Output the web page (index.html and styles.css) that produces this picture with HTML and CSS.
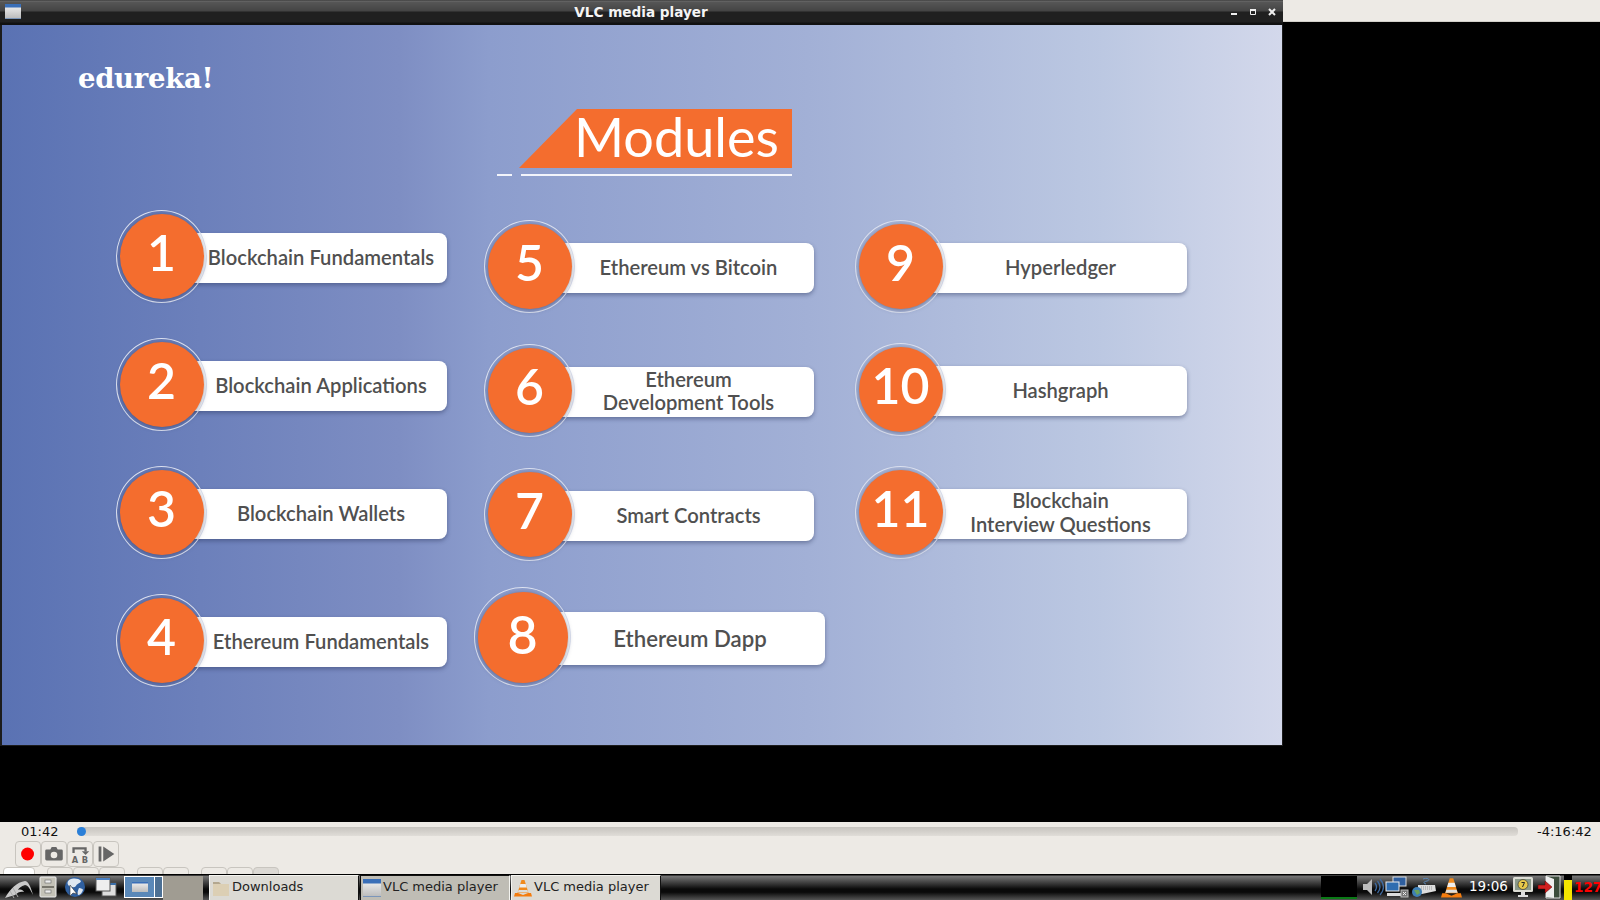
FILE: index.html
```html
<!DOCTYPE html>
<html lang="en">
<head>
<meta charset="utf-8">
<title>VLC media player</title>
<link rel="stylesheet" href="styles.css">
</head>
<body>
<div class="upper">
  <div class="window">
    <div class="titlebar">
      <div class="win-icon"></div>
      <div class="title">VLC media player</div>
      <div class="win-btns">
        <svg class="win-btn" viewBox="0 0 8 8"><rect x="1" y="5" width="6" height="2" fill="#eee"/></svg>
        <svg class="win-btn" viewBox="0 0 8 8"><path d="M1.5 1.5h5v5h-5z" fill="none" stroke="#eee"/><rect x="1" y="1" width="6" height="2" fill="#eee"/></svg>
        <svg class="win-btn" viewBox="0 0 8 8"><path d="M1 1l6 6M7 1l-6 6" stroke="#eee" stroke-width="2"/></svg>
      </div>
    </div>
    <div class="slide">
      <div class="logo">edureka!</div>
      <div class="heading">
        <div class="banner">Modules</div>
        <div class="rule"><span class="rule-a"></span><span class="rule-b"></span></div>
      </div>
      <div class="columns">
        <div class="col col-1">
          <div class="item"><div class="ring"><div class="disc">1</div></div><div class="pill">Blockchain Fundamentals</div></div>
          <div class="item"><div class="ring"><div class="disc">2</div></div><div class="pill">Blockchain Applications</div></div>
          <div class="item"><div class="ring"><div class="disc">3</div></div><div class="pill">Blockchain Wallets</div></div>
          <div class="item"><div class="ring"><div class="disc">4</div></div><div class="pill">Ethereum Fundamentals</div></div>
        </div>
        <div class="col col-2">
          <div class="item"><div class="ring"><div class="disc">5</div></div><div class="pill">Ethereum vs Bitcoin</div></div>
          <div class="item"><div class="ring"><div class="disc">6</div></div><div class="pill">Ethereum<br>Development Tools</div></div>
          <div class="item"><div class="ring"><div class="disc">7</div></div><div class="pill">Smart Contracts</div></div>
          <div class="item item-big"><div class="ring"><div class="disc">8</div></div><div class="pill">Ethereum Dapp</div></div>
        </div>
        <div class="col col-3">
          <div class="item"><div class="ring"><div class="disc">9</div></div><div class="pill">Hyperledger</div></div>
          <div class="item"><div class="ring"><div class="disc">10</div></div><div class="pill">Hashgraph</div></div>
          <div class="item"><div class="ring"><div class="disc">11</div></div><div class="pill pill-tall">Blockchain<br>Interview Questions</div></div>
        </div>
      </div>
    </div>
  </div>
  <div class="side"></div>
</div>

<div class="controls">
  <div class="seek">
    <span class="time time-l">01:42</span>
    <div class="track"><span class="knob"></span></div>
    <span class="time time-r">-4:16:42</span>
  </div>
  <div class="buttons">
    <div class="cbtn"><svg viewBox="0 0 26 26"><circle cx="12.500" cy="13" r="7" fill="#f00"/></svg></div>
    <div class="cbtn"><svg viewBox="0 0 26 26"><path fill="#666" fill-rule="evenodd" d="M5 8h4l1.500-2.500h5L17 8h4a1.500 1.500 0 0 1 1.500 1.500v9A1.500 1.500 0 0 1 21 20H5a1.500 1.500 0 0 1-1.500-1.500v-9A1.500 1.500 0 0 1 5 8zm8 2.500a3.500 3.500 0 1 0 0 7.200 3.500 3.500 0 0 0 0-7.200z"/></svg></div>
    <div class="cbtn"><svg viewBox="0 0 26 26"><path d="M6 12V7h13v3" fill="none" stroke="#666" stroke-width="2.500"/><path d="M15 10h8l-4 4z" fill="#666"/><text x="4" y="23" class="ab">A</text><text x="15" y="23" class="ab">B</text></svg></div>
    <div class="cbtn"><svg viewBox="0 0 26 26"><path fill="#666" d="M5 5h3v16H5zM10 5l12 8-12 8z"/></svg></div>
  </div>
  <div class="stub-row">
    <span class="stub stub-white"></span>
    <div class="stub-group"><span class="stub"></span><span class="stub"></span><span class="stub"></span></div>
    <div class="stub-group"><span class="stub"></span><span class="stub"></span></div>
    <div class="stub-group"><span class="stub"></span><span class="stub"></span><span class="stub stub-dim"></span></div>
  </div>
</div>

<div class="taskbar">
  <svg class="tb-logo" viewBox="0 0 30 24"><path d="M1 23C6 14 13 7 21 6c3 0 6 6 8 14-3-6-5-10-8-10-4 1-6 3-7 5 3-1 5 0 6 2-3-1-6 0-9 3-3 1-7 2-10 3z" fill="#c9c9c9"/><path d="M9 13l5 9M6 16l4 7" stroke="#aaa" stroke-width="1"/></svg>
  <svg class="tb-cab" viewBox="0 0 18 22"><rect x="1" y="1" width="16" height="20" rx="1" fill="#c4c2b8" stroke="#eee"/><path d="M3 10.500h12M3 11.500h12" stroke="#77756c"/><rect x="6" y="4" width="6" height="3" fill="#eee" stroke="#666" stroke-width=".6"/><rect x="6" y="14" width="6" height="3" fill="#eee" stroke="#666" stroke-width=".6"/></svg>
  <svg class="tb-globe" viewBox="0 0 22 22"><circle cx="11" cy="11" r="10" fill="#2f5f9f"/><path d="M5 4c4-2 9-2 12 1-1 3-4 2-5 5-2 2-4 1-7 0-2-2-2-4 0-6zM15 12c2 0 4 1 4 2-1 3-3 5-5 5-1-2 0-5 1-7z" fill="#dfe7f0"/><path d="M6 9v11l3-3 4 1z" fill="#fff" stroke="#333" stroke-width=".6"/></svg>
  <svg class="tb-wins" viewBox="0 0 22 20"><rect x="7" y="6" width="14" height="13" fill="#ddd" stroke="#555"/><rect x="7" y="6" width="14" height="2" fill="#3a6ea8"/><rect x="1" y="1" width="14" height="13" fill="#eee" stroke="#555"/><rect x="1" y="1" width="14" height="2" fill="#4a7fc0"/></svg>
  <div class="pager">
    <div class="pager-a"><div class="pager-win"></div></div>
    <div class="pager-b"></div>
  </div>
  <div class="pager-grey"></div>
  <div class="task task-idle">
    <svg class="task-icon" viewBox="0 0 18 18"><path d="M1 3h6l2 2h8v12H1z" fill="#dccfb4"/><path d="M1 3h6l2 2H1z" fill="#b3a78f"/></svg>
    <span>Downloads</span>
  </div>
  <div class="task task-active">
    <div class="mini-win"></div>
    <span>VLC media player</span>
  </div>
  <div class="task task-last">
    <svg class="task-icon" viewBox="0 0 18 18"><use href="#cone"/></svg>
    <span>VLC media player</span>
  </div>
  <div class="tray">
    <div class="graph"><span class="graph-line"></span></div>
    <svg class="tray-vol" viewBox="0 0 22 20"><path d="M1 7h4l5-5v16l-5-5H1z" fill="#bbb"/><path d="M13 6q3 4 0 8M15.500 4q5 6 0 12M18 2q7 8 0 16" fill="none" stroke="#3f6aa0" stroke-width="1.300"/></svg>
    <svg class="tray-net" viewBox="0 0 24 22"><rect x="8" y="1" width="13" height="9" fill="#2f5f9f" stroke="#ddd"/><rect x="1" y="6" width="13" height="9" fill="#2f6db0" stroke="#eee"/><rect x="2" y="17" width="14" height="3" fill="#ddd"/><rect x="16" y="14" width="7" height="7" fill="#777" stroke="#bbb"/><path d="M18 16l3 3m0-3l-3 3" stroke="#eee"/></svg>
    <svg class="tray-kbd" viewBox="0 0 24 22"><path d="M11 3c5-2 8 1 4 2s-4 2-1 3" fill="none" stroke="#5c87b5"/><path d="M6 9h17l1 6-14 3H6z" fill="#ddd"/><path d="M9 11h12M9 13h12" stroke="#999" stroke-dasharray="1 1"/><circle cx="5" cy="16" r="5" fill="#3f7fb5"/><path d="M2 14h5l1 3-3 2z" fill="#6aa35c"/></svg>
    <svg class="tray-cone" viewBox="0 0 18 18"><use href="#cone"/></svg>
    <span class="clock">19:06</span>
    <svg class="tray-mon" viewBox="0 0 22 22"><rect x="1" y="1" width="20" height="15" rx="1.500" fill="#dcdcd4"/><rect x="3" y="3" width="16" height="11" fill="#8a9a8a"/><circle cx="11" cy="8.500" r="5" fill="#e5c84a" stroke="#333" stroke-width=".7"/><path d="M9.500 6.500h3L10.500 11" fill="none" stroke="#222" stroke-width="1"/><path d="M9 16h4v3h3v2H6v-2h3z" fill="#ddd"/></svg>
    <svg class="tray-exit" viewBox="0 0 24 24"><path d="M9 1h14v22H9z" fill="#3c4c3c" stroke="#ddd"/><path d="M9 1l8 3v19l-8-1z" fill="#eee"/><path d="M1 10h7V6l7 6-7 6v-4H1z" fill="#d02020" stroke="#500" stroke-width=".5"/></svg>
    <div class="cpu"><span class="cpu-fill"></span></div>
    <span class="cpu-num">127</span>
  </div>
</div>

<svg class="defs" width="0" height="0" aria-hidden="true"><defs>
  <g id="cone"><path d="M7.500 1h3L14.500 14h-11z" fill="#f08a1d"/><path d="M6.300 5h5.400l1 3.500H5.300z" fill="#eee"/><path d="M4.600 11h8.800l.8 2.500H3.800z" fill="#ddd"/><path d="M1 14h3l5 2 5-2h3l1 3.500H0z" fill="#f47c0f"/></g>
</defs></svg>
</body>
</html>
```
FILE: styles.css
```css
* { box-sizing: border-box; }
html, body { margin: 0; padding: 0; }
body {
  width: 1600px;
  height: 900px;
  overflow: hidden;
  background: #000;
  display: flex;
  flex-direction: column;
  font-family: "DejaVu Sans", sans-serif;
}
.defs { display: block; flex: none; height: 0; }

/* upper black area with the window */
.upper { height: 822px; flex: none; display: flex; align-items: flex-start; }
.window { width: 1283px; height: 746px; background: #1c1c1c; flex: none; padding: 0 1px 1px 2px; }
.side { flex: 1; height: 22px; background: #edeae5; border-bottom: 1px solid #d2cfca; }

.titlebar {
  height: 25px;
  margin: 0 -1px 0 -2px;
  display: flex;
  align-items: center;
  background: linear-gradient(#2a2a2a 0, #6d6d6d 1px, #565656 2px, #444 11px, #202020 12px, #202020 22px, #111 23px);
  padding: 0 7px 2px 5px;
}
.win-icon {
  width: 16px;
  height: 15px;
  background: linear-gradient(#3a6fb8 0, #3a6fb8 3px, #e6e6e6 4px, #bdbdbd 14px, #3a6fb8 15px);
}
.title {
  flex: 1;
  text-align: center;
  color: #f4f4f4;
  font-weight: 700;
  font-size: 13.600px;
  line-height: 22px;
  padding-left: 31px;
}
.win-btns { display: flex; gap: 11px; }
.win-btn { width: 8px; height: 8px; display: block; }

/* slide */
.slide {
  width: 1280px;
  height: 720px;
  background: linear-gradient(90deg, #5a72b3 0%, #7e8ec3 31%, #8c9dcd 38%, #a2b0d6 63%, #bcc8e2 86%, #d3d8eb 100%);
  overflow: hidden;
}
.logo {
  height: 84px;
  padding: 37px 0 0 76px;
  font-family: "DejaVu Serif", serif;
  font-weight: 700;
  font-size: 27.500px;
  line-height: 32px;
  color: #fff;
  letter-spacing: -.3px;
}
.heading { margin-left: 495px; width: 295px; }
.banner {
  margin-left: 22px;
  width: 273px;
  height: 59px;
  padding-left: 55px;
  background: #f46d2e;
  clip-path: polygon(58px 0, 100% 0, 100% 100%, 0 100%);
  color: #fff;
  font-family: Lato, sans-serif;
  font-size: 54px;
  line-height: 56px;
}
.rule { display: flex; margin-top: 6px; height: 2px; }
.rule-a { width: 15px; background: #f2f4fb; }
.rule-b { width: 271px; margin-left: 9px; background: #f2f4fb; }

.columns { display: flex; align-items: flex-start; padding: 32px 0 0 114px; }
.col { display: flex; flex-direction: column; width: 331px; flex: none; }
.col-1 { gap: 34px; padding-top: 1px; }
.col-2 { gap: 30px; margin-left: 37px; padding-top: 11px; width: 330px; }
.col-3 { gap: 29px; margin-left: 41px; padding-top: 11px; width: 332px; }

.item { display: flex; align-items: center; height: 94px; }
.ring {
  width: 91px;
  height: 93px;
  flex: none;
  border: 1.5px solid #dfe4f2;
  border-radius: 50%;
  display: flex;
  align-items: center;
  justify-content: center;
  position: relative;
  z-index: 1;
}
.disc {
  width: 84px;
  height: 85px;
  border-radius: 50%;
  background: #f46d2e;
  color: #fff;
  font-family: Lato, sans-serif;
  font-weight: 600;
  font-size: 50px;
  line-height: 77px;
  text-align: center;
  box-shadow: 0 1px 5px rgba(40, 45, 80, .5);
}
.pill {
  flex: 1;
  height: 50px;
  margin: 4px 0 0 -20px;
  padding: 0 0 2px 8px;
  background: #fff;
  border-radius: 0 8px 8px 0;
  box-shadow: 0 2px 4px rgba(40, 50, 90, .45);
  color: #505050;
  font-family: Lato, sans-serif;
  font-weight: 600;
  font-size: 20.200px;
  line-height: 23px;
  text-align: center;
  display: flex;
  align-items: center;
  justify-content: center;
}
.pill-tall { line-height: 24px; padding-bottom: 4px; }
.item-big { margin: -1px 0 0 -10px; width: 351px; }
.item-big .ring { width: 97px; height: 100px; }
.item-big .disc { width: 90px; height: 91px; font-size: 52px; line-height: 84px; }
.item-big .pill { height: 53px; margin-top: 2px; padding: 0 0 0 4px; font-size: 22.200px; }

/* player controls */
.controls { height: 52px; flex: none; background: #edeae5; overflow: hidden; }
.seek { display: flex; align-items: center; height: 19px; }
.time { font-size: 13px; color: #111; line-height: 19px; }
.time-l { width: 77px; padding-left: 21px; }
.time-r { flex: 1; padding-left: 19px; }
.track {
  width: 1441px;
  height: 9px;
  border-radius: 4px;
  background: linear-gradient(#c6c3be, #e0ddd8);
  display: flex;
  align-items: center;
}
.knob { width: 9px; height: 9px; border-radius: 50%; background: #2a7fd8; }
.buttons { display: flex; padding-left: 15px; }
.cbtn {
  width: 26px;
  height: 26px;
  border: 1px solid #c8c5bf;
  border-radius: 4px;
  background: #edeae5;
}
.cbtn svg { display: block; width: 24px; height: 24px; }
.ab { font-family: "DejaVu Sans", sans-serif; font-size: 9px; font-weight: 700; fill: #666; }
.stub-row { display: flex; padding-left: 3px; height: 8px; }
.stub-group { display: flex; margin-left: 12px; }
.stub { width: 26px; height: 14px; border: 1px solid #c8c5bf; border-radius: 4px; }
.stub-white { width: 32px; background: #fff; }
.stub-dim { background: #dcd9d4; }

/* taskbar */
.taskbar {
  height: 26px;
  flex: none;
  display: flex;
  align-items: center;
  background: linear-gradient(#000 0, #000 1px, #777 2px, #0a0a0a 58%, #0a0a0a 70%, #555 100%);
  font-size: 13px;
  color: #222;
}
.tb-logo { width: 30px; height: 24px; margin-left: 4px; flex: none; }
.tb-cab { width: 18px; height: 22px; margin-left: 5px; flex: none; }
.tb-globe { width: 22px; height: 22px; margin-left: 7px; flex: none; }
.tb-wins { width: 22px; height: 20px; margin-left: 9px; flex: none; }
.pager {
  width: 39px;
  height: 22px;
  margin-left: 7px;
  flex: none;
  display: flex;
  border: 1px solid #fff;
  background: #4d7094;
}
.pager-a { width: 30px; border-right: 1px solid #fff; display: flex; align-items: center; justify-content: center; background: #5a88b8; }
.pager-win { width: 16px; height: 10px; background: linear-gradient(#3a6fb8 1px, #e6e6e6 2px, #bbb); }
.pager-b { flex: 1; }
.pager-grey { width: 40px; height: 24px; flex: none; background: #a09c92; margin-top: 1px; }
.task {
  width: 150px;
  height: 25px;
  margin-top: 1px;
  padding: 0 0 3px 2px;
  flex: none;
  display: flex;
  align-items: center;
  gap: 2px;
  background: #dcdad4;
  border-top: 1px solid #f4f4f0;
  border-left: 1px solid #f4f4f0;
  border-right: 1px solid #111;
  overflow: hidden;
  white-space: nowrap;
}
.task svg, .mini-win { margin-top: 3px; }
.task-idle { margin-left: 6px; }
.task-active { background: #bfbdb5; margin-left: 1px; border-color: #111 #f4f4f0 #f4f4f0 #111; }
.task-last { margin-left: 1px; }
.task-icon { width: 18px; height: 18px; flex: none; }
.mini-win { width: 18px; height: 18px; flex: none; background: linear-gradient(#3a6fb8 0, #3a6fb8 4px, #e6e6e6 5px, #bdbdbd 17px, #3a6fb8 18px); }
.tray { flex: 1; display: flex; align-items: center; height: 26px; }
.graph {
  width: 36px;
  height: 23px;
  margin-left: 660px;
  background: #000;
  display: flex;
  align-items: flex-end;
  flex: none;
}
.graph-line { width: 100%; height: 2px; background: #0a7a16; }
.tray-vol { width: 22px; height: 20px; margin-left: 5px; flex: none; }
.tray-net { width: 24px; height: 22px; margin-left: 1px; flex: none; }
.tray-kbd { width: 24px; height: 22px; margin-left: 3px; flex: none; }
.tray-cone { width: 21px; height: 21px; margin-left: 5px; flex: none; }
.clock { color: #fff; font-size: 13.500px; margin: 0 0 3px 7px; width: 37px; flex: none; }
.tray-mon { width: 22px; height: 22px; margin-left: 6px; flex: none; }
.tray-exit { width: 24px; height: 24px; margin-left: 3px; flex: none; }
.cpu { width: 8px; height: 25px; margin: 1px 0 0 3px; background: #000; display: flex; align-items: flex-end; flex: none; }
.cpu-fill { width: 100%; height: 20px; background: #f4e400; }
.cpu-num { color: #f00; font-weight: 700; font-size: 13.500px; margin: 0 0 1px 2px; flex: none; }
```
